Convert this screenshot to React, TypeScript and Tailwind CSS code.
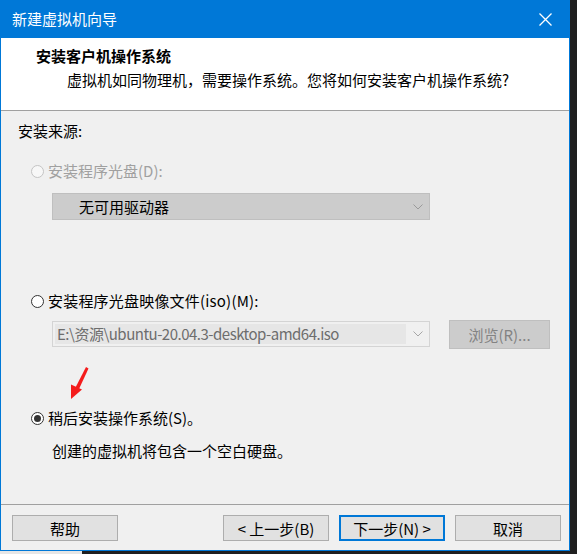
import React from "react";

const font = { fontFamily: '"Noto Sans CJK SC", "Noto Sans", sans-serif' };

function Chevron({ color = "#a0a0a0" }: { color?: string }) {
  return (
    <svg width="10" height="6" viewBox="0 0 10 6">
      <polyline points="0.5,0.5 5,5 9.5,0.5" fill="none" stroke={color} strokeWidth="1" />
    </svg>
  );
}

function Radio({ state }: { state: "disabled" | "off" | "on" }) {
  if (state === "disabled")
    return <div className="w-[13px] h-[13px] rounded-full border border-[#c4c4c4] bg-[#f7f7f7]" />;
  if (state === "off")
    return <div className="w-[13px] h-[13px] rounded-full border border-[#333333] bg-white" />;
  return (
    <div className="w-[13px] h-[13px] rounded-full border border-[#333333] bg-white flex items-center justify-center">
      <div className="w-[7px] h-[7px] rounded-full bg-[#333333]" />
    </div>
  );
}

function Btn({ children, primary }: { children: React.ReactNode; primary?: boolean }) {
  return (
    <div
      className={
        "w-[106px] h-[26px] flex items-center justify-center bg-[#e1e1e1] text-[15px] text-black leading-none " +
        (primary ? "border-2 border-[#0078d7]" : "border border-[#adadad]")
      }
    >
      {children}
    </div>
  );
}

export default function App() {
  return (
    <div className="w-[577px] h-[554px] bg-[#1f1f1f] relative overflow-hidden" style={font}>
      <div className="absolute left-0 top-[551px] w-[82px] h-[3px] bg-[#e6e6e6]" />
      <div className="w-[570px] h-[551px] flex flex-col border-x border-b border-[#0078d7] bg-[#f0f0f0]">
        {/* title bar */}
        <div className="h-[38px] bg-[#0078d7] flex items-center justify-between pl-[11px] pr-[17px] shrink-0">
          <span className="text-white text-[15px] leading-[20px]">新建虚拟机向导</span>
          <svg width="13" height="13" viewBox="0 0 13 13">
            <path d="M0.5 0.5 L12.5 12.5 M12.5 0.5 L0.5 12.5" stroke="white" strokeWidth="1.3" />
          </svg>
        </div>
        {/* header */}
        <div className="h-[72px] bg-white shrink-0 pt-[8px]">
          <div className="pl-[35px] text-[15px] leading-[20px] font-bold text-black">安装客户机操作系统</div>
          <div className="pl-[66px] mt-[4px] text-[15px] leading-[20px] text-black">
            虚拟机如同物理机，需要操作系统。您将如何安装客户机操作系统?
          </div>
        </div>
        <div className="h-px bg-[#a0a0a0] shrink-0" />
        {/* body */}
        <div className="relative flex-1 flex flex-col pl-[17px] pt-[10px] text-[15px] leading-[20px] text-black">
          <div>安装来源:</div>
          <div className="mt-[20px] flex items-center gap-[4px] pl-[13px]">
            <Radio state="disabled" />
            <span className="text-[#a0a0a0]">安装程序光盘(D):</span>
          </div>
          <div className="mt-[12px] ml-[34px] w-[378px] h-[27px] bg-[#cccccc] border border-[#bfbfbf] flex items-center justify-between pl-[26px] pr-[6px]">
            <span>无可用驱动器</span>
            <Chevron color="#9a9a9a" />
          </div>
          <div className="mt-[71px] flex items-center gap-[4px] pl-[13px]">
            <Radio state="off" />
            <span className="tracking-[0.2px]">安装程序光盘映像文件(iso)(M):</span>
          </div>
          <div className="mt-[9px] ml-[34px] flex items-start gap-[19px]">
            <div className="mt-[1px] w-[378px] h-[26px] bg-[#f0f0f0] border border-[#d4d4d4] flex items-center p-[2px] pr-[6px]">
              <div className="h-full w-[351px] bg-[#e6e6e6] flex items-center pl-[2px] text-[#6d6d6d] tracking-[-0.5px]">
                E:\资源\ubuntu-20.04.3-desktop-amd64.iso
              </div>
              <div className="flex-1 flex justify-end">
                <Chevron color="#a6a6a6" />
              </div>
            </div>
            <div className="w-[101px] h-[29px] bg-[#cccccc] border border-[#bfbfbf] flex items-center justify-center text-[#838383]">
              浏览(R)...
            </div>
          </div>
          <div className="mt-[59px] flex items-center gap-[4px] pl-[13px]">
            <Radio state="on" />
            <span>稍后安装操作系统(S)。</span>
          </div>
          <div className="mt-[13px] pl-[34px]">创建的虚拟机将包含一个空白硬盘。</div>
          {/* annotation arrow */}
          <svg className="absolute left-[64px] top-[255px]" width="26" height="36" viewBox="0 0 26 36">
            <path d="M21 1 L23.5 2.5 L14 23 L10.5 21.5 Z" fill="#f41c1c" />
            <path d="M6 18.5 L17 23.5 L6 33 Z" fill="#f41c1c" />
          </svg>
        </div>
        <div className="h-px bg-[#a0a0a0] shrink-0" />
        {/* footer */}
        <div className="h-[45px] shrink-0 flex items-start justify-between pt-[10px] pl-[11px] pr-[8px]">
          <Btn>帮助</Btn>
          <div className="flex gap-[10px]">
            <Btn>&lt; 上一步(B)</Btn>
            <Btn primary>下一步(N) &gt;</Btn>
            <Btn>取消</Btn>
          </div>
        </div>
      </div>
    </div>
  );
}
